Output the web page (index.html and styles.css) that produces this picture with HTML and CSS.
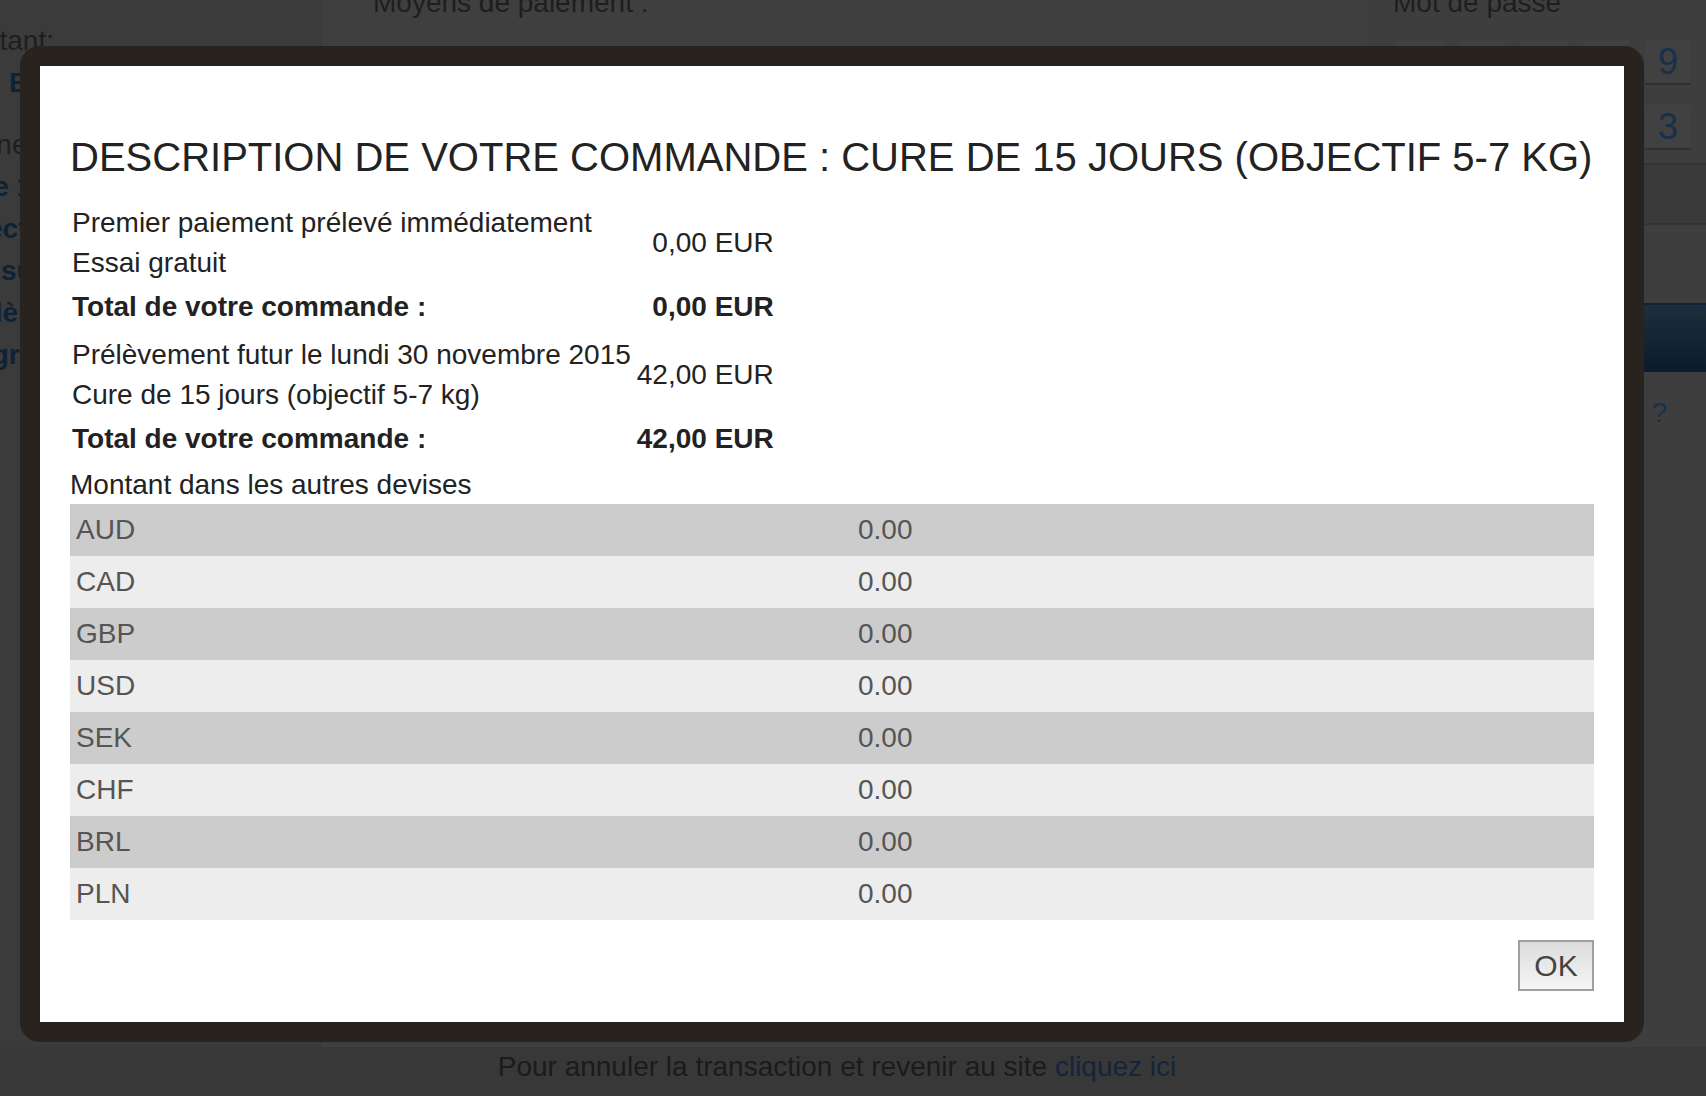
FILE: index.html
```html
<!DOCTYPE html>
<html lang="fr">
<head>
    <meta charset="UTF-8">
    <meta name="viewport" content="width=device-width, initial-scale=1.0">
    <title>Paiement</title>
    <link rel="stylesheet" href="styles.css">
</head>
<body>
    <div class="page">
        <aside class="summary-col">
            <div class="amount-block">
                <div class="label">Montant:</div>
                <div class="amount">EUR 42,00</div>
            </div>
            <div class="label sub">Connexion</div>
            <ul class="order-list">
                <li>Cure 15</li>
                <li>Sélection</li>
                <li>Mensuel</li>
                <li>Modèle</li>
                <li>Progr.</li>
            </ul>
        </aside>
        <main class="payment-col">
            <h3>Moyens de paiement :</h3>
        </main>
        <aside class="login-col">
            <h3>Mot de passe</h3>
            <div class="keypad">
                <span></span><span></span><span></span><span></span><span>9</span>
                <span></span><span></span><span></span><span></span><span>3</span>
            </div>
            <div class="code-field"></div>
            <div class="submit-bar"></div>
            <a class="forgot" href="#">Mot de passe oublié ?</a>
        </aside>
    </div>
    <p class="cancel">Pour annuler la transaction et revenir au site <a href="#">cliquez ici</a></p>

    <div class="overlay">
        <div class="dialog">
            <h2>DESCRIPTION DE VOTRE COMMANDE : CURE DE 15 JOURS (OBJECTIF 5-7 KG)</h2>
            <table class="summary">
                <tr>
                    <td>Premier paiement prélevé immédiatement<br>Essai gratuit</td>
                    <td class="price">0,00 EUR</td>
                </tr>
                <tr class="total">
                    <td>Total de votre commande :</td>
                    <td class="price">0,00 EUR</td>
                </tr>
                <tr>
                    <td>Prélèvement futur le lundi 30 novembre 2015<br>Cure de 15 jours (objectif 5-7 kg)</td>
                    <td class="price">42,00 EUR</td>
                </tr>
                <tr class="total">
                    <td>Total de votre commande :</td>
                    <td class="price">42,00 EUR</td>
                </tr>
            </table>
            <div class="devises-title">Montant dans les autres devises</div>
            <table class="rates">
                <tr><td class="code">AUD</td><td>0.00</td></tr>
                <tr><td class="code">CAD</td><td>0.00</td></tr>
                <tr><td class="code">GBP</td><td>0.00</td></tr>
                <tr><td class="code">USD</td><td>0.00</td></tr>
                <tr><td class="code">SEK</td><td>0.00</td></tr>
                <tr><td class="code">CHF</td><td>0.00</td></tr>
                <tr><td class="code">BRL</td><td>0.00</td></tr>
                <tr><td class="code">PLN</td><td>0.00</td></tr>
            </table>
            <div class="actions">
                <button class="ok">OK</button>
            </div>
        </div>
    </div>
</body>
</html>
```

FILE: styles.css
```css
body {
    margin: 0;
    height: 100vh;
    overflow: hidden;
    display: flex;
    flex-direction: column;
    font-family: "Liberation Sans", Arial, Helvetica, sans-serif;
    font-size: 28px;
    line-height: 40px;
    color: #1e1e1e;
    background-color: #383838;
}

/* page behind the dialog (already dimmed) */
.page {
    flex: 1;
    min-height: 0;
    display: flex;
    margin-top: -17px;
    margin-left: -55px;
}
.summary-col {
    width: 377px;
    padding-top: 37px;
    background-color: #3b3b3b;
    line-height: 42px;
}
.amount-block .amount {
    padding-left: 64px;
    font-weight: bold;
    color: #0d2235;
}
.label.sub {
    margin-top: 20px;
}
.order-list {
    list-style: none;
    margin: 0;
    padding: 0;
    font-weight: bold;
    color: #0d2235;
}
.payment-col {
    width: 1040px;
    padding-left: 51px;
    background-color: #3f3f3f;
    box-sizing: border-box;
}
.payment-col h3,
.login-col h3 {
    margin: 0;
    font-size: 28px;
    font-weight: normal;
    line-height: 40px;
}
.login-col {
    flex: 1;
    padding-left: 31px;
    background-color: #3e3e3e;
}
.keypad {
    display: grid;
    grid-template-columns: repeat(5, 46px);
    column-gap: 16px;
    row-gap: 20px;
    margin: 17px 0 0 4px;
}
.keypad span {
    height: 43px;
    line-height: 43px;
    text-align: center;
    font-size: 36px;
    color: #17304b;
    background-color: #414141;
    border-bottom: 2px solid #2f2f2f;
}
.code-field {
    margin: 13px 0 0 -31px;
    height: 58px;
    background-color: #3a3a3a;
    border-top: 2px solid #333;
    border-bottom: 2px solid #333;
}
.submit-bar {
    margin: 78px 0 0 -31px;
    height: 67px;
    border-top: 2px solid #0b243a;
    background: linear-gradient(#1e2e3b, #0a1c2c);
}
.forgot {
    display: block;
    margin-top: 21px;
    color: #17304b;
    text-decoration: none;
}
.cancel {
    margin: 0;
    padding: 0 32px 9px 0;
    text-align: center;
    color: #1b1b1b;
}
.cancel a {
    color: #14243a;
    text-decoration: none;
}

/* modal dialog */
.overlay {
    position: fixed;
    top: 0;
    left: 0;
    right: 0;
    bottom: 0;
    display: flex;
    padding: 46px 62px 54px 20px;
}
.dialog {
    flex: 1;
    display: flex;
    flex-direction: column;
    align-items: flex-start;
    padding: 67px 30px 31px;
    background-color: #fff;
    border: 20px solid #29231f;
    border-radius: 20px;
    color: #222;
}
.dialog h2 {
    margin: 0 0 19px;
    font-size: 40px;
    line-height: 48px;
    font-weight: normal;
    white-space: nowrap;
}
.summary {
    border-collapse: collapse;
}
.summary td {
    padding: 3px 2px;
}
.summary .price {
    padding-left: 4px;
    text-align: right;
    white-space: nowrap;
}
.summary .total td {
    padding-top: 1px;
    padding-bottom: 5px;
    font-weight: bold;
}
.devises-title {
    margin-top: 1px;
}
.rates {
    align-self: stretch;
    margin-top: -1px;
    border-collapse: collapse;
    color: #555;
}
.rates td {
    height: 52px;
    padding: 0 6px;
}
.rates .code {
    width: 770px;
}
.rates tr:nth-child(odd) {
    background-color: #ccc;
}
.rates tr:nth-child(even) {
    background-color: #ededed;
}
.actions {
    align-self: stretch;
    margin-top: 20px;
    display: flex;
    justify-content: flex-end;
}
.ok {
    width: 76px;
    height: 51px;
    padding: 0;
    font-family: "Liberation Sans", Arial, Helvetica, sans-serif;
    font-size: 30px;
    color: #444;
    border: 2px solid #a0a0a0;
    background: linear-gradient(#dcdcdc, #f5f5f5);
    cursor: pointer;
}
```
